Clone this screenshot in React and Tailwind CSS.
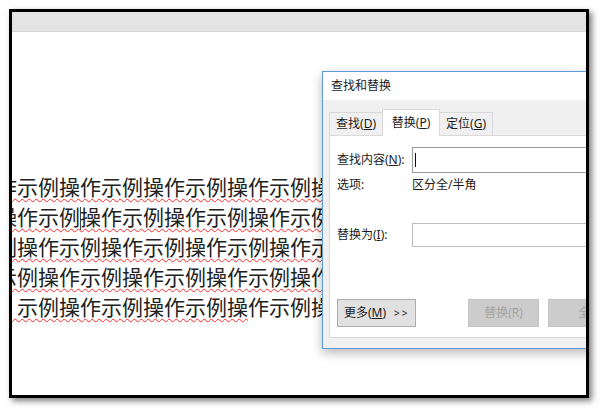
import React from "react";

const ui = "font-['Noto_Sans','Noto_Sans_CJK_SC',sans-serif]";

function Tab({ label, k, active }) {
  return (
    <div
      className={
        active
          ? "relative z-10 -mb-px -ml-px flex h-[27px] w-[58px] items-center justify-center border border-b-0 border-[#d9d9d9] bg-white text-[12px] text-[#1a1a1a]"
          : "flex h-[23px] w-[54px] items-center justify-center border border-b-0 border-[#d9d9d9] bg-[#f0f0f0] text-[12px] text-[#1a1a1a]"
      }
    >
      <span>
        {label}(<span className="underline underline-offset-1">{k}</span>)
      </span>
    </div>
  );
}

export default function App() {
  const wavy =
    "underline decoration-wavy decoration-[#ff2a2a] decoration-1 underline-offset-[3px]";
  return (
    <div className="h-[409px] w-[600px] overflow-hidden bg-white pl-[9px] pt-[9px]">
      <div className="relative flex h-[389px] w-[580px] flex-col overflow-hidden border-[3px] border-black bg-white shadow-[3px_3px_6px_rgba(0,0,0,0.5)]">
        <div className="h-[20px] shrink-0 border-b border-[#d6d6d6] bg-[#e4e4e4]" />
        <div className="flex-1 pt-[139px] font-['Noto_Sans_CJK_SC',sans-serif] text-[21px] leading-[30px] text-[#222]">
          <div className="-ml-[16px] whitespace-nowrap">
            <div className={wavy}>作示例操作示例操作示例操作示例操作示例</div>
            <div className={wavy}>
              操作示例
              <span className="-mr-px inline-block h-[23px] w-px bg-[#444] align-[-5px]" />
              操作示例操作示例操作示例操作示例
            </div>
            <div className={wavy}>例操作示例操作示例操作示例操作示例操作</div>
            <div className={wavy}>示例操作示例操作示例操作示例操作示例操</div>
            <div>
              <span className={wavy}>　示例操作示例操作示例操</span>
              作示例操作示例操
            </div>
          </div>
        </div>

        {/* Find & Replace dialog window */}
        <div
          className={`absolute left-[310px] top-[59px] flex h-[278px] w-[400px] flex-col border border-[#5d9ad6] bg-white shadow-[0_4px_10px_rgba(0,0,0,0.28)] ${ui}`}
        >
          <div className="flex h-[28px] shrink-0 items-center pl-[8px] text-[12px] text-[#1a1a1a]">
            查找和替换
          </div>
          <div className="flex flex-1 flex-col bg-[#f0f0f0] pl-[6px] pt-[9px]">
            <div className="flex h-[26px] items-end">
              <Tab label="查找" k="D" />
              <Tab label="替换" k="P" active />
              <div className="-ml-px flex h-[23px] w-[54px] items-center justify-center border border-b-0 border-[#d9d9d9] bg-[#f0f0f0] text-[12px] text-[#1a1a1a]">
                <span>
                  定位(<span className="underline underline-offset-1">G</span>)
                </span>
              </div>
            </div>
            <div className="flex h-[203px] flex-col border border-[#d9d9d9] bg-white pl-[7px] text-[12px] text-[#1a1a1a]">
              <div className="mt-[11px] flex h-[26px] items-center">
                <div className="w-[75px]">
                  查找内容(<span className="underline underline-offset-1">N</span>):
                </div>
                <div className="flex h-[26px] w-[220px] items-center border border-[#9a9a9a] bg-white pl-[2px]">
                  <span className="h-[14px] w-px bg-black" />
                </div>
              </div>
              <div className="mt-[4px] flex h-[16px] items-center">
                <div className="w-[75px]">选项:</div>
                <div>区分全/半角</div>
              </div>
              <div className="mt-[30px] flex h-[24px] items-center">
                <div className="w-[75px]">
                  替换为(<span className="underline underline-offset-1">I</span>):
                </div>
                <div className="h-[24px] w-[220px] border border-[#bdbdbd] bg-white" />
              </div>
              <div className="mt-[52px] flex h-[28px] items-center">
                <div className="flex h-[28px] w-[79px] items-center border border-[#adadad] bg-[#e1e1e1] pl-[6px]">
                  更多(<span className="underline underline-offset-1">M</span>)
                  <span className="ml-[8px] text-[10px] tracking-[2px]">&gt;&gt;</span>
                </div>
                <div className="ml-[52px] flex h-[28px] w-[71px] items-center justify-center border border-[#c4c4c4] bg-[#cccccc] text-[#a3a3a3]">
                  替换(R)
                </div>
                <div className="ml-[9px] flex h-[28px] w-[100px] items-center border border-[#c4c4c4] bg-[#cccccc] pl-[29px] text-[#a3a3a3]">
                  全部替换(A)
                </div>
              </div>
            </div>
          </div>
        </div>
      </div>
    </div>
  );
}
